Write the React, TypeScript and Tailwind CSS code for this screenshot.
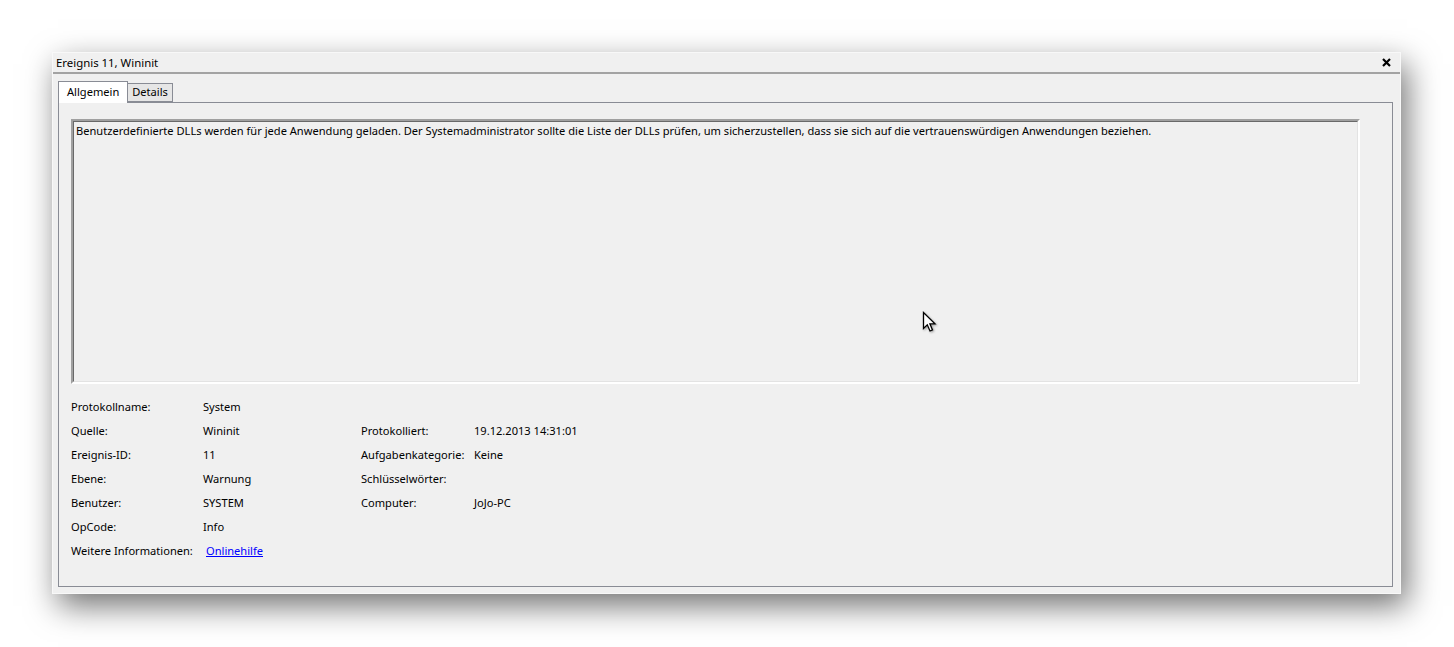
import React from 'react';

const FONT = { fontFamily: '"Noto Sans", "Liberation Sans", sans-serif' };

type Row = { label: string; value?: React.ReactNode; label2?: string; value2?: string };

const ROWS: Row[] = [
  { label: 'Protokollname:', value: 'System' },
  { label: 'Quelle:', value: 'Wininit', label2: 'Protokolliert:', value2: '19.12.2013 14:31:01' },
  { label: 'Ereignis-ID:', value: '11', label2: 'Aufgabenkategorie:', value2: 'Keine' },
  { label: 'Ebene:', value: 'Warnung', label2: 'Schlüsselwörter:', value2: '' },
  { label: 'Benutzer:', value: 'SYSTEM', label2: 'Computer:', value2: 'JoJo-PC' },
  { label: 'OpCode:', value: 'Info' },
  {
    label: 'Weitere Informationen:',
    value: <span className="ml-[3px] text-[#0000ff] underline cursor-pointer">Onlinehilfe</span>,
  },
];

function Cursor() {
  return (
    <svg
      className="absolute left-[922px] top-[311px] drop-shadow-[1px_1px_1px_rgba(0,0,0,0.35)]"
      width="16"
      height="24"
      viewBox="0 0 16 24"
    >
      <path
        d="M1.5 1.5 L1.5 17.5 L5.3 13.8 L8 20 L10.5 18.9 L7.9 12.8 L13 12.8 Z"
        fill="#fff"
        stroke="#000"
        strokeWidth="1.3"
        strokeLinejoin="miter"
      />
    </svg>
  );
}

export default function App() {
  return (
    <div className="relative w-[1454px] h-[647px] bg-white overflow-hidden text-[11.1px] text-black" style={FONT}>
      <div className="absolute left-[52px] top-[52px] w-[1349px] h-[542px] flex flex-col bg-[#f0f0f0] border border-[#f8f8f8] shadow-[6px_12px_30px_rgba(0,0,0,0.55)]">
        {/* title bar */}
        <div className="h-[19px] flex items-center justify-between pl-[3px] pr-[9px] leading-none text-[11.4px]">
          <span>Ereignis 11, Wininit</span>
          <svg width="9" height="9" viewBox="0 0 9 9">
            <path d="M1 1 L8 8 M8 1 L1 8" stroke="#000" strokeWidth="2.2" />
          </svg>
        </div>
        <div className="h-[2px] bg-[#a3a3a3]" />

        {/* tabs */}
        <div className="flex items-end pl-[5px] pt-[6px]">
          <div className="h-[22px] px-[8px] flex items-center bg-white border border-b-0 border-[#898c95] relative top-[1px] z-10">
            Allgemein
          </div>
          <div className="h-[19px] px-[4px] flex items-center bg-[#e6e6e6] border border-l-0 border-[#898c95]">
            Details
          </div>
        </div>

        {/* panel */}
        <div className="flex-1 ml-[5px] mr-[7px] mb-[6px] border border-[#898c95] bg-[#f0f0f0] flex flex-col pl-[12px] pt-[16px] pr-[32px]">
          <div className="h-[265px] border-2 border-t-[#a0a0a0] border-l-[#a0a0a0] border-b-white border-r-white">
            <div className="h-full border border-t-[#696969] border-l-[#696969] border-b-[#e3e3e3] border-r-[#e3e3e3] px-[2px] pt-[1px] leading-[16px] bg-[#f0f0f0]">
              Benutzerdefinierte DLLs werden für jede Anwendung geladen. Der Systemadministrator sollte die Liste der DLLs prüfen, um sicherzustellen, dass sie sich auf die vertrauenswürdigen Anwendungen beziehen.
            </div>
          </div>

          <div className="mt-[11px] grid grid-cols-[132px_158px_113px_1fr]">
            {ROWS.map((r, i) => (
              <React.Fragment key={i}>
                <div className="h-[24px] flex items-center">{r.label}</div>
                <div className="h-[24px] flex items-center">{r.value}</div>
                <div className="h-[24px] flex items-center">{r.label2}</div>
                <div className="h-[24px] flex items-center">{r.value2}</div>
              </React.Fragment>
            ))}
          </div>
        </div>
      </div>

      <Cursor />
    </div>
  );
}
